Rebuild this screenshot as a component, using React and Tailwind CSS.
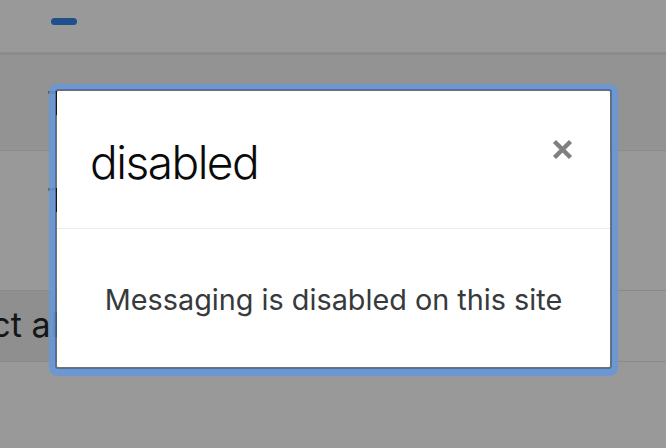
export default function App() {
  return (
    <div className="relative w-[666px] h-[448px] overflow-hidden bg-[#999999] font-['Inter',sans-serif]">
      {/* page (dimmed by backdrop) */}
      <div className="h-[52px] flex items-start">
        <div className="mt-[18px] ml-[51px] w-[26px] h-[7px] rounded-full bg-[#1f4f8c]" />
      </div>
      <div className="h-[3px] bg-[#8c8c8c]" />
      <div className="h-[96px] bg-[#939393] border-b border-[#8a8a8a] pl-[47px] pt-[33px]">
        <div className="text-[32px] leading-none text-[#151617] whitespace-nowrap">Test</div>
      </div>
      <div className="h-[139px] pl-[47px] pt-[34px]">
        <div className="text-[32px] leading-none text-[#151617] whitespace-nowrap">Test</div>
      </div>
      <div className="h-[72px] border-y border-[#8a8a8a] flex">
        <div className="w-[300px] h-full bg-[#8f8f8f] flex">
          <div className="w-[67px] flex justify-end pt-[17px]">
            <span className="text-[34px] leading-none text-[#151617] whitespace-nowrap">Select all</span>
          </div>
        </div>
      </div>

      {/* modal */}
      <div className="absolute left-[55px] top-[89px] w-[557px] h-[280px] rounded-[3px] border-2 border-black/25 bg-white bg-clip-padding shadow-[0_1px_1px_6px_rgba(104,151,214,0.92)] flex flex-col">
        <div className="h-[138px] border-b border-[#e9ecef] flex items-start justify-between pl-[33px] pr-[37px] pt-[48px]">
          <div className="text-[46px] leading-none font-light text-[#0a0a0a] tracking-[-1.5px]">disabled</div>
          <svg width="21" height="21" viewBox="0 0 21 21">
            <path d="M2.5 2.5 L18.5 18.5 M18.5 2.5 L2.5 18.5" stroke="#808080" strokeWidth="4.5" strokeLinecap="butt" fill="none" />
          </svg>
        </div>
        <div className="flex-1 flex justify-center pt-[57px]">
          <div className="text-[28.8px] leading-none text-[#373a3c] whitespace-nowrap">Messaging is disabled on this site</div>
        </div>
      </div>
    </div>
  );
}
